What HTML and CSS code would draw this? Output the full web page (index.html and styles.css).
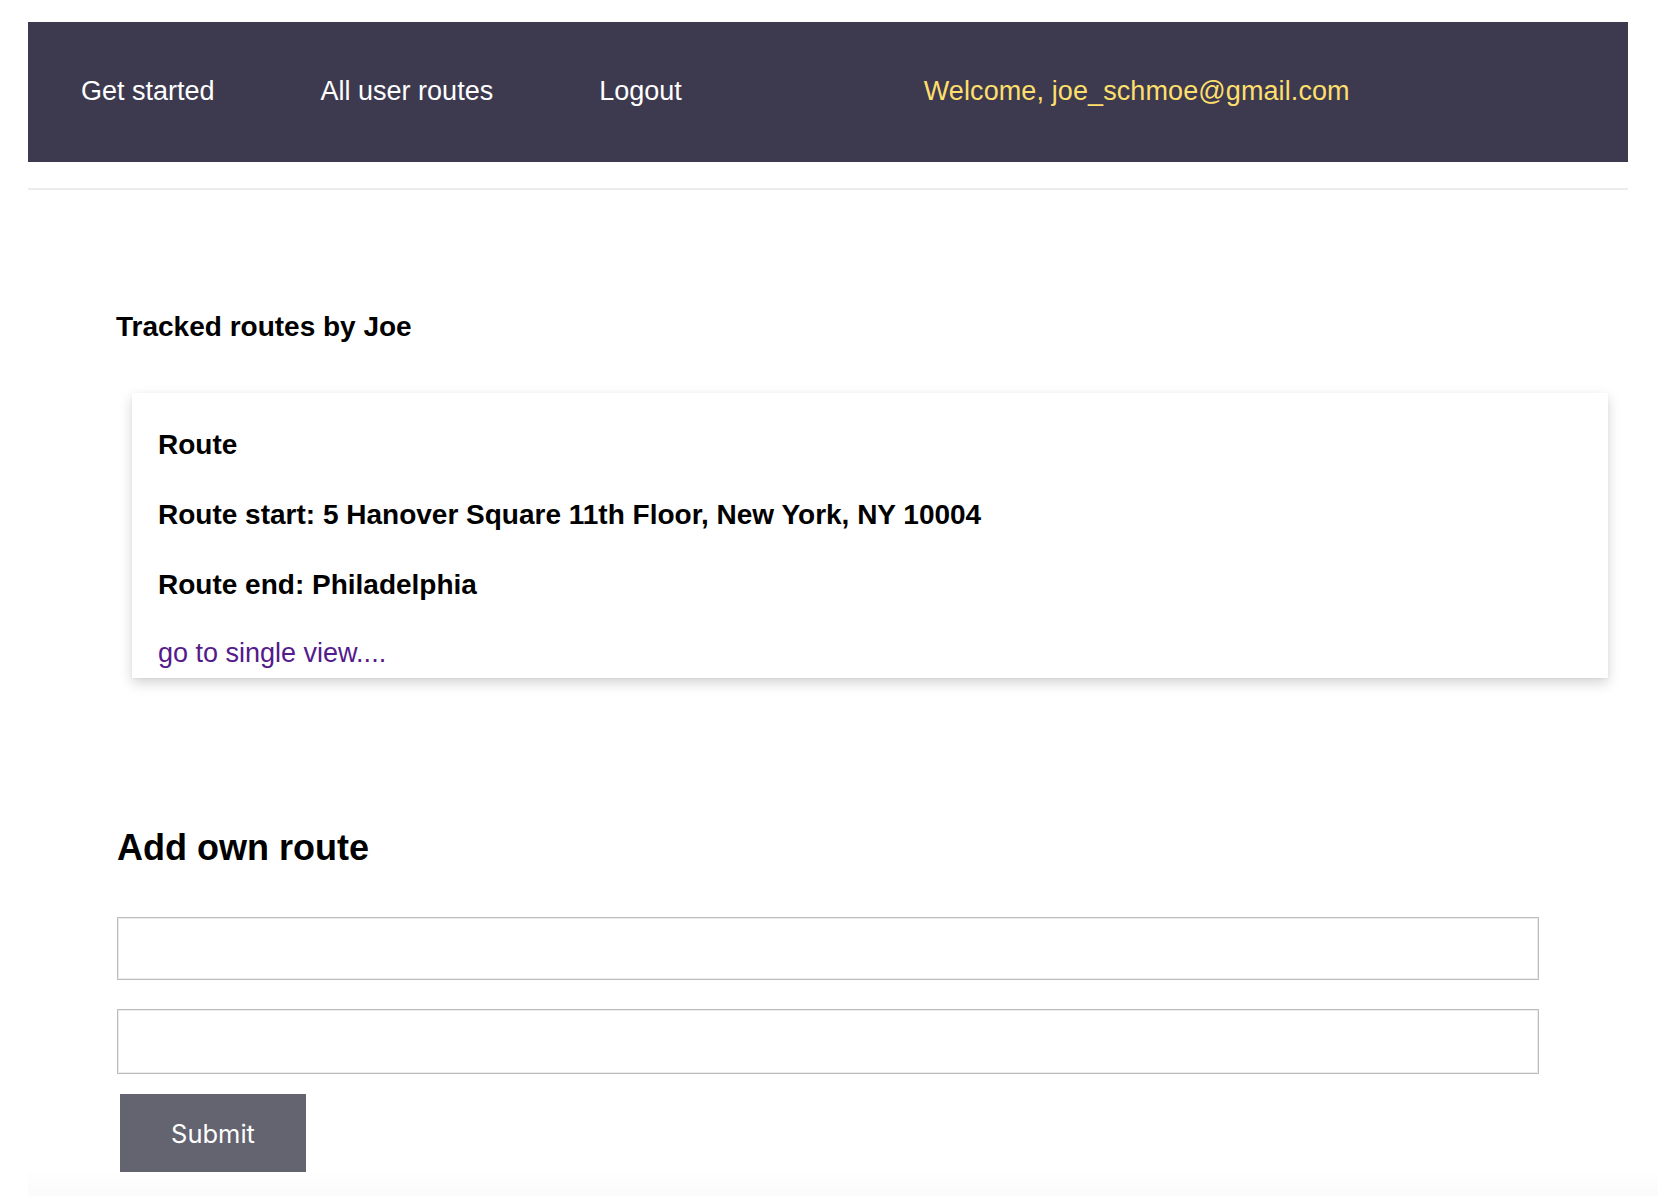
FILE: index.html
```html
<!DOCTYPE html>
<html lang="en">
<head>
<meta charset="utf-8">
<title>Tracked routes</title>
<link rel="stylesheet" href="styles.css">
</head>
<body>
<div class="page">
  <nav class="navbar">
    <a class="nav-link" href="#">Get started</a>
    <a class="nav-link" href="#">All user routes</a>
    <a class="nav-link" href="#">Logout</a>
    <span class="welcome">Welcome, joe_schmoe@gmail.com</span>
  </nav>
  <div class="divider"></div>

  <main class="content">
    <h4 class="section-title">Tracked routes by Joe</h4>
    <div class="card">
      <p class="card-line">Route</p>
      <p class="card-line">Route start: 5 Hanover Square 11th Floor, New York, NY 10004</p>
      <p class="card-line">Route end: Philadelphia</p>
      <a class="card-link" href="#">go to single view....</a>
    </div>

    <h2 class="form-title">Add own route</h2>
    <form class="route-form">
      <input class="field field-first" type="text">
      <input class="field field-second" type="text">
      <button class="submit" type="button">Submit</button>
    </form>
  </main>
</div>
<div class="footer-band"></div>
</body>
</html>
```

FILE: styles.css
```css
html, body {
  margin: 0;
  padding: 0;
  background: #ffffff;
}

body {
  font-family: "Liberation Sans", Arial, Helvetica, sans-serif;
  color: #000;
  min-height: 1196px;
  position: relative;
}

.page {
  padding: 22px 30px 0 28px;
}

.navbar {
  display: flex;
  align-items: flex-start;
  height: 140px;
  box-sizing: border-box;
  padding-top: 53px;
  background: #3d3a50;
}

.nav-link {
  font-size: 27px;
  line-height: 32px;
  color: #ffffff;
  text-decoration: none;
  padding: 0 53px;
}

.welcome {
  font-size: 27px;
  line-height: 32px;
  color: #fddf6c;
  margin-left: 189px;
  letter-spacing: 0.1px;
}

.divider {
  margin-top: 26px;
  border-top: 2px solid #ededed;
}

.content {
  padding-left: 88px;
}

.section-title {
  margin: 121px 0 0 0;
  font-size: 28px;
  line-height: 32px;
  font-weight: bold;
}

.card {
  margin: 50px 0 0 16px;
  width: 1476px;
  box-sizing: border-box;
  padding: 36px 26px 9px 26px;
  background: #fff;
  box-shadow: 0 5px 12px 0 rgba(0, 0, 0, 0.17), 0 1px 3px rgba(0, 0, 0, 0.04);
}

.card-line {
  margin: 0 0 38px 0;
  font-size: 28px;
  line-height: 32px;
  font-weight: bold;
}

.card-line:nth-child(3) {
  margin-bottom: 36px;
}

.card-link {
  display: block;
  font-size: 27px;
  line-height: 32px;
  color: #551a8b;
  text-decoration: none;
}

.form-title {
  margin: 150px 0 0 1px;
  font-size: 36px;
  line-height: 40px;
  font-weight: bold;
}

.route-form {
  display: flex;
  flex-direction: column;
  align-items: flex-start;
  margin: 49px 0 0 1px;
}

.field {
  display: block;
  width: 1422px;
  box-sizing: border-box;
  margin: 0;
  border: 1px solid #bdbdbd;
  box-shadow: inset 0 0 0 1px #ececec;
  background: #fff;
  outline: none;
  font-size: 20px;
  padding: 0 10px;
}

.field-first {
  height: 63px;
}

.field-second {
  height: 65px;
  margin-top: 29px;
}

.submit {
  margin: 20px 0 0 3px;
  width: 186px;
  height: 78px;
  border: none;
  background: #63646f;
  color: #ffffff;
  font-family: "Inter", "Liberation Sans", sans-serif;
  font-size: 25.5px;
  padding: 0;
}

.footer-band {
  position: absolute;
  left: 28px;
  right: 0;
  top: 1172px;
  height: 24px;
  background: linear-gradient(#fefefe, #fbfbfb);
}
```
